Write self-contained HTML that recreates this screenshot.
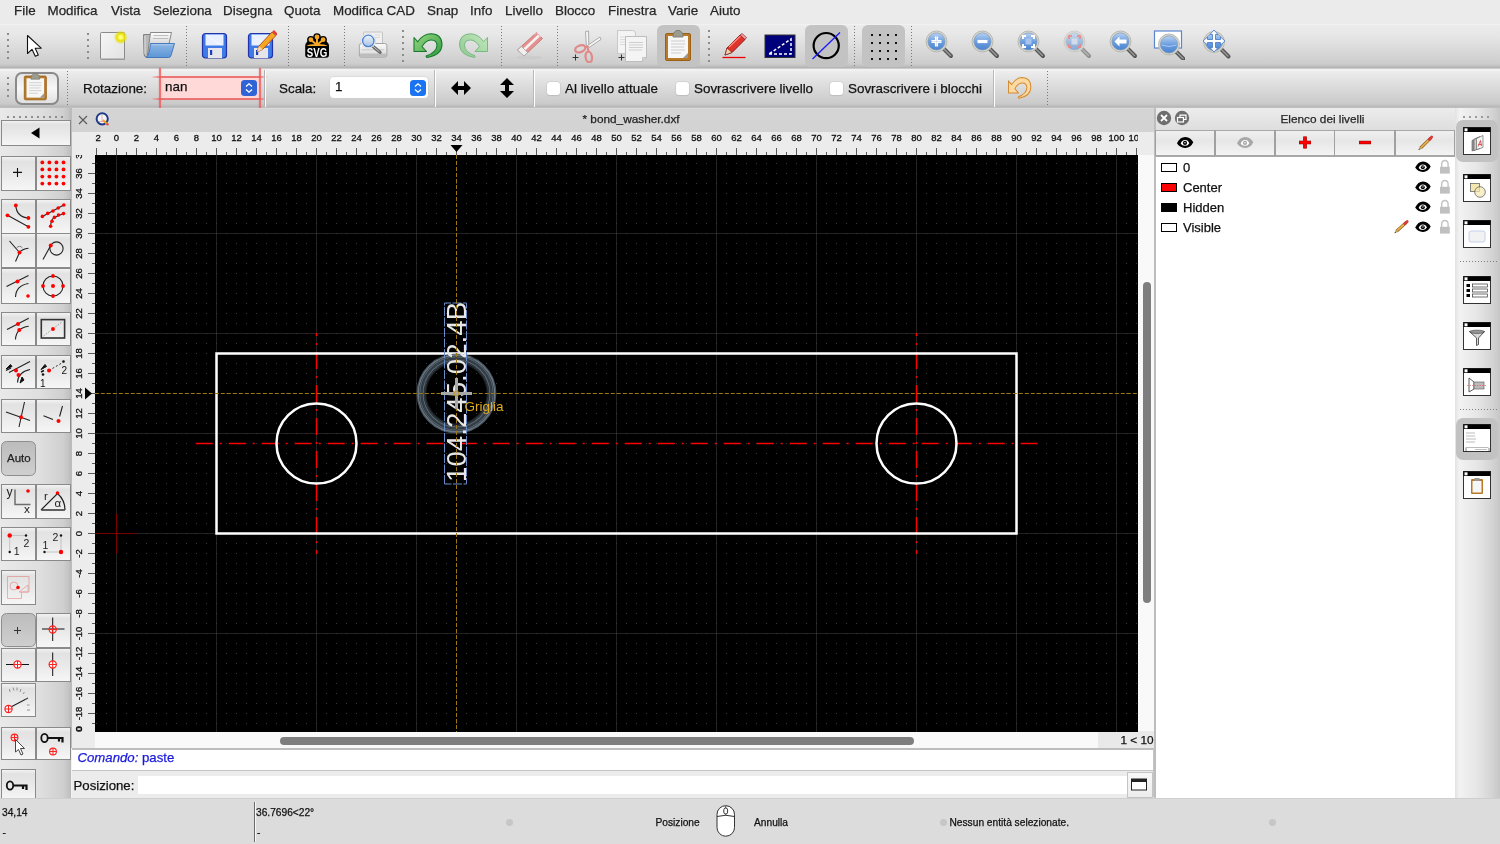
<!DOCTYPE html>
<html><head><meta charset="utf-8">
<style>
*{box-sizing:border-box;margin:0;padding:0}
html,body{width:1500px;height:844px;overflow:hidden;background:#e6e6e6;font-family:"Liberation Sans",sans-serif;color:#222}
.a{position:absolute}
.t{position:absolute;white-space:nowrap;line-height:1;-webkit-text-stroke:0.25px currentColor}
#menu{left:0;top:0;width:1500px;height:24px;background:#ebebeb}
#menu .t{top:3.5px;font-size:13.4px;color:#262626}
.tb{background:linear-gradient(#ededed,#e3e3e3 30%,#cfcfcf 95%,#b9b9b9)}
#tb1{left:0;top:24px;width:1500px;height:44px;background:linear-gradient(#f4f4f4 0,#ebebeb 1.6px,#e7e7e7 25%,#d9d9d9 60%,#cdcdcd 90%,#c2c2c2 95%,#b4b4b4 99%)}
#tb2{left:0;top:68px;width:1500px;height:40px;background:linear-gradient(#b8b8b8 0,#f6f6f6 1.6px,#ededed 3px,#e5e5e5 25%,#d6d6d6 60%,#cbcbcb 88%,#c2c2c2 93%,#b5b5b5 97.5%,#c8c8c8 100%)}
.sep{position:absolute;width:2px;background:repeating-linear-gradient(#8a8a8a 0 1px,transparent 1px 4px)}
.vsep{position:absolute;width:1px;background:#fafafa;border-left:1px solid #c0c0c0}
.press{position:absolute;background:#c4c4c4;border-radius:5px}
#tb2 .t{font-size:13.4px;color:#1e1e1e}
</style></head><body><div id="root" style="position:absolute;left:0;top:0;width:1500px;height:844px;will-change:transform;overflow:hidden;background:#e6e6e6">
<!-- MENU -->
<div id="menu" class="a">
<span class="t" style="left:14px">File</span>
<span class="t" style="left:47.5px">Modifica</span>
<span class="t" style="left:111px">Vista</span>
<span class="t" style="left:153px">Seleziona</span>
<span class="t" style="left:223px">Disegna</span>
<span class="t" style="left:284px">Quota</span>
<span class="t" style="left:333px">Modifica CAD</span>
<span class="t" style="left:427px">Snap</span>
<span class="t" style="left:470px">Info</span>
<span class="t" style="left:505px">Livello</span>
<span class="t" style="left:555px">Blocco</span>
<span class="t" style="left:608px">Finestra</span>
<span class="t" style="left:668px">Varie</span>
<span class="t" style="left:710px">Aiuto</span>
</div>

<!-- TOOLBAR 1 -->
<div id="tb1" class="a"></div>

<!-- TOOLBAR 2 -->
<div id="tb2" class="a"></div>
<div class="a" style="left:7px;top:33px;width:2px;height:2px;background:#8c8c8c"></div><div class="a" style="left:7px;top:39px;width:2px;height:2px;background:#8c8c8c"></div><div class="a" style="left:7px;top:45px;width:2px;height:2px;background:#8c8c8c"></div><div class="a" style="left:7px;top:51px;width:2px;height:2px;background:#8c8c8c"></div><div class="a" style="left:7px;top:57px;width:2px;height:2px;background:#8c8c8c"></div>
<svg class="a" style="left:25px;top:34px" width="18" height="24" viewBox="0 0 18 24" ><path d="M2.5 1.5V19.5L7 15.3L10.3 22.3L13.3 20.9L10.2 14.2H16.2Z" fill="#fff" stroke="#111" stroke-width="1.1" stroke-linejoin="round"/></svg>
<div class="a" style="left:87px;top:33px;width:2px;height:2px;background:#8c8c8c"></div><div class="a" style="left:87px;top:39px;width:2px;height:2px;background:#8c8c8c"></div><div class="a" style="left:87px;top:45px;width:2px;height:2px;background:#8c8c8c"></div><div class="a" style="left:87px;top:51px;width:2px;height:2px;background:#8c8c8c"></div><div class="a" style="left:87px;top:57px;width:2px;height:2px;background:#8c8c8c"></div>
<svg class="a" style="left:98px;top:30px" width="30" height="32" viewBox="0 0 30 32" ><defs><radialGradient id="glow"><stop offset="0.2" stop-color="#ffff80"/><stop offset="0.55" stop-color="#e8e000"/><stop offset="1" stop-color="#e8e000" stop-opacity="0"/></radialGradient><linearGradient id="pg" x1="0" y1="0" x2="1" y2="1"><stop offset="0" stop-color="#f6f6f6"/><stop offset="1" stop-color="#e2e2e2"/></linearGradient></defs><rect x="2.5" y="2.5" width="24" height="27" rx="1" fill="url(#pg)" stroke="#8a8a8a" stroke-width="1"/><rect x="3" y="28.5" width="24" height="1.5" fill="#9a9a9a"/><circle cx="22.7" cy="7.3" r="7" fill="url(#glow)"/></svg>
<svg class="a" style="left:138px;top:26px" width="42" height="38" viewBox="0 0 42 38" ><defs><linearGradient id="fbg" x1="0" y1="0" x2="0" y2="1"><stop offset="0" stop-color="#8fb8e4"/><stop offset="1" stop-color="#5b95d6"/></linearGradient><linearGradient id="fpg" x1="0" y1="0" x2="0" y2="1"><stop offset="0" stop-color="#fdfdfd"/><stop offset="1" stop-color="#b4b4b4"/></linearGradient></defs><path d="M5.5 8.5H13V31H8.5Q6 31 6 28Z" fill="#b8b8b8" stroke="#7a7a7a" stroke-width=".9"/><path d="M7 10V28" stroke="#dcdcdc" stroke-width="1"/><path d="M12.5 6.5H33.5L31 17.5L9.5 29Z" fill="url(#fpg)" stroke="#7d7d7d" stroke-width=".9"/><path d="M15.5 9.5H30.5M15 12.5H30" stroke="#bdbdbd" stroke-width="1.2"/><path d="M12.5 17.5H36.5L33 29.5Q32.5 31.5 30.5 31.5H8Q11.5 29 12.5 17.5Z" fill="url(#fbg)" stroke="#3f72b8" stroke-width=".9"/><path d="M13.5 18.8H35" stroke="#b4d2f0" stroke-width=".8"/></svg>
<div class="a" style="left:186px;top:26px;width:1px;height:40px;background:repeating-linear-gradient(#7a7a7a 0 1px,transparent 1px 3px)"></div>
<svg class="a" style="left:201px;top:32px" width="28" height="28" viewBox="0 0 28 28" ><rect x="1.5" y="1.5" width="24" height="24.5" rx="3" fill="#3f7ae6" stroke="#2233aa" stroke-width="1.2"/><rect x="4.5" y="2.5" width="18" height="11" fill="#e8f0ff"/><path d="M5 3L20 13" stroke="#fff" stroke-width="1" opacity=".6"/><rect x="7" y="16" width="14" height="10" fill="#e6e6ea"/><rect x="9" y="18" width="2.2" height="5" fill="#1a40c0"/></svg>
<svg class="a" style="left:247px;top:28px" width="30" height="32" viewBox="0 0 30 32" ><g transform="translate(0 4)"><rect x="1.5" y="1.5" width="24" height="24.5" rx="3" fill="#3f7ae6" stroke="#2233aa" stroke-width="1.2"/><rect x="4.5" y="2.5" width="18" height="11" fill="#e8f0ff"/><path d="M5 3L20 13" stroke="#fff" stroke-width="1" opacity=".6"/><rect x="7" y="16" width="14" height="10" fill="#e6e6ea"/><rect x="9" y="18" width="2.2" height="5" fill="#1a40c0"/></g><path d="M10 24L12 18L25 4L29 7.5L15.5 21.5Z" fill="#f5a623" stroke="#a8461a" stroke-width="0.9"/><path d="M25 4L27 2L30.5 5.5L29 7.5Z" fill="#e0403a"/><path d="M10 24L12 18L15.5 21.5Z" fill="#f0d8b0"/></svg>
<div class="a" style="left:288px;top:26px;width:1px;height:40px;background:repeating-linear-gradient(#7a7a7a 0 1px,transparent 1px 3px)"></div>
<svg class="a" style="left:300px;top:28px" width="35" height="34" viewBox="0 0 35 34" ><g fill="#000"><circle cx="10.9" cy="11.7" r="3.8"/><circle cx="17" cy="9" r="3.8"/><circle cx="23.1" cy="11.7" r="3.8"/><rect x="5.2" y="14.8" width="23.8" height="15" rx="3"/><path d="M8 13L17 10L26 13L28.5 15.5H5.5Z"/></g><g fill="#f5a828"><circle cx="10.9" cy="11.7" r="2.4"/><circle cx="17" cy="9" r="2.4"/><circle cx="23.1" cy="11.7" r="2.4"/><path d="M6.5 18Q8 16 17 16Q26 16 27.5 18Z"/></g><path d="M10.9 11.7L17 17M17 9V17M23.1 11.7L17 17" stroke="#f5a828" stroke-width="2"/><text transform="translate(17 29) scale(0.72 1)" text-anchor="middle" font-family="Liberation Sans" font-weight="bold" font-size="13.5" fill="#fff">SVG</text></svg>
<div class="a" style="left:344px;top:26px;width:1px;height:40px;background:repeating-linear-gradient(#7a7a7a 0 1px,transparent 1px 3px)"></div>
<svg class="a" style="left:355px;top:28px" width="35" height="34" viewBox="0 0 35 34" ><defs><linearGradient id="prg" x1="0" y1="0" x2="0" y2="1"><stop offset="0" stop-color="#fafafa"/><stop offset="1" stop-color="#d6d6d6"/></linearGradient><linearGradient id="plg" x1="0" y1="0" x2="0" y2="1"><stop offset="0" stop-color="#eef4fb"/><stop offset="1" stop-color="#a9c1e2"/></linearGradient></defs><rect x="8.5" y="4" width="19" height="14" rx="1" fill="#f0f0f0" stroke="#c4c4c4" stroke-width="1"/><path d="M20 7H25M20 9.5H25" stroke="#d8d8d8" stroke-width="1"/><rect x="4.3" y="15.5" width="27.6" height="13.6" rx="2.2" fill="url(#prg)" stroke="#a4a4a4" stroke-width="1"/><rect x="5" y="25.5" width="26.2" height="3.2" rx="1" fill="#bdbdbd"/><path d="M6.5 21.8H29" stroke="#c8c8c8" stroke-width="1"/><path d="M17.5 18L25 24.3" stroke="#6a6a6a" stroke-width="3.4" stroke-linecap="round"/><path d="M18 18.3L24.5 23.8" stroke="#c4c4c4" stroke-width="1"/><circle cx="13.3" cy="12.9" r="7.3" fill="#fbfbfb" stroke="#d0d0d0" stroke-width=".6"/><circle cx="13.3" cy="12.9" r="5.7" fill="url(#plg)" stroke="#4a80d0" stroke-width="1.3"/></svg>
<div class="a" style="left:402px;top:30px;width:2px;height:2px;background:#8c8c8c"></div><div class="a" style="left:402px;top:36px;width:2px;height:2px;background:#8c8c8c"></div><div class="a" style="left:402px;top:42px;width:2px;height:2px;background:#8c8c8c"></div><div class="a" style="left:402px;top:48px;width:2px;height:2px;background:#8c8c8c"></div><div class="a" style="left:402px;top:54px;width:2px;height:2px;background:#8c8c8c"></div><div class="a" style="left:402px;top:60px;width:2px;height:2px;background:#8c8c8c"></div>
<svg class="a" style="left:410px;top:28px" width="36" height="34" viewBox="0 0 36 34" ><defs><linearGradient id="ug" x1="0" y1="0" x2="1" y2="1"><stop offset="0" stop-color="#9ad883"/><stop offset="1" stop-color="#2e9a40"/></linearGradient><linearGradient id="rg" x1="0" y1="0" x2="1" y2="1"><stop offset="0" stop-color="#c4e8bc"/><stop offset="1" stop-color="#8cc890"/></linearGradient></defs><path d="M4 9.5L7.8 13.8Q13 6 21 5.8Q32 6 32 17Q31.5 27 17 29.5Q15.5 28.5 16.5 27.8Q26.5 24.5 27 17.5Q27 12 21 12Q16 12 12 18.5L16.5 23.5L4 23.5Z" fill="url(#ug)" stroke="#167a2c" stroke-width="1.1" stroke-linejoin="round"/></svg>
<svg class="a" style="left:455px;top:28px" width="36" height="34" viewBox="0 0 36 34" ><g transform="translate(36.5 0) scale(-1 1)"><path d="M4 9.5L7.8 13.8Q13 6 21 5.8Q32 6 32 17Q31.5 27 17 29.5Q15.5 28.5 16.5 27.8Q26.5 24.5 27 17.5Q27 12 21 12Q16 12 12 18.5L16.5 23.5L4 23.5Z" fill="url(#rg)" stroke="#78b884" stroke-width="1" stroke-linejoin="round"/></g></svg>
<div class="a" style="left:501px;top:26px;width:1px;height:40px;background:repeating-linear-gradient(#7a7a7a 0 1px,transparent 1px 3px)"></div>
<svg class="a" style="left:512px;top:26px" width="36" height="36" viewBox="0 0 36 36" ><ellipse cx="17" cy="31.5" rx="13" ry="1.8" fill="#c4c4c4" opacity=".55"/><path d="M5.5 24L24.5 6.5L30.5 12.5L12 30Z" fill="#e69090" stroke="#c06a6a" stroke-width=".8"/><path d="M8.5 27L27 9.5" stroke="#f2f2f2" stroke-width="2.6"/><path d="M22 8.5L24.8 7L29 11" stroke="#f0b8b8" stroke-width="1" fill="none"/><path d="M5.5 24L9.5 20.5L15.5 26.5L12 30Z" fill="#f0f0f0" stroke="#a8a8a8" stroke-width=".8"/></svg>
<div class="a" style="left:557px;top:26px;width:1px;height:40px;background:repeating-linear-gradient(#7a7a7a 0 1px,transparent 1px 3px)"></div>
<svg class="a" style="left:569px;top:29px" width="34" height="34" viewBox="0 0 34 34" ><path d="M16.5 2.5L19.5 2L19.8 17L17.5 18Z" fill="#f6f6f6" stroke="#9a9a9a" stroke-width=".8"/><path d="M31 8L32 10.5L20 18.5L18.5 16.5Z" fill="#f6f6f6" stroke="#9a9a9a" stroke-width=".8"/><ellipse cx="11.2" cy="19.8" rx="5.3" ry="3.3" fill="none" stroke="#e08a8a" stroke-width="2.3" transform="rotate(-22 11.2 19.8)"/><ellipse cx="19.8" cy="28" rx="3.2" ry="5.4" fill="none" stroke="#e08a8a" stroke-width="2.3" transform="rotate(-8 19.8 28)"/><path d="M15.5 18.5L18.5 17.5L19.5 22.5" stroke="#e08a8a" stroke-width="2" fill="none"/><path d="M3.5 28.5H9.5M6.5 25.5V31.5" stroke="#333" stroke-width="1"/></svg>
<svg class="a" style="left:615px;top:29px" width="34" height="34" viewBox="0 0 34 34" ><path d="M2.5 1.5H17.5Q20.5 1.5 20.5 4.5V24.5H2.5Z" fill="#f4f4f4" stroke="#c8c8c8" stroke-width="1"/><path d="M5 8H17M5 10.5H17M5 13H17M5 15.5H17" stroke="#dcdcdc" stroke-width="1"/><path d="M10.5 7.5H31.5V28.5L27.5 32.5H10.5Z" fill="#f4f4f4" stroke="#bdbdbd" stroke-width="1"/><path d="M27.5 32.5L27.5 28.5H31.5Z" fill="#d8d8d8" stroke="#bdbdbd" stroke-width=".8"/><path d="M14 13.5H28M14 16H28M14 18.5H28M14 21H27" stroke="#cfcfcf" stroke-width="1"/><path d="M3.5 28.5H9.5M6.5 25.5V31.5" stroke="#333" stroke-width="1"/></svg>
<div class="a" style="left:657px;top:25px;width:43px;height:42px;background:#c3c3c3;border-radius:6px"></div>
<svg class="a" style="left:664px;top:30px" width="28" height="32" viewBox="0 0 28 32" ><rect x="1.5" y="3.5" width="25" height="27" rx="1.5" fill="#b87a28" stroke="#9a6018" stroke-width="1"/><rect x="4" y="6" width="20" height="22" fill="#f7f7f7"/><path d="M19 28L24 23V28Z" fill="#9a9a9a"/><path d="M7 11H21M7 14H21M7 17H20M7 20H21M7 23H17" stroke="#cdcdcd" stroke-width="1"/><path d="M9 5.5Q9 2 11 2L12 0.5H16L17 2Q19 2 19 5.5V7H9Z" fill="#9b9b8e" stroke="#77776a" stroke-width=".8"/></svg>
<div class="a" style="left:708px;top:30px;width:2px;height:2px;background:#8c8c8c"></div><div class="a" style="left:708px;top:36px;width:2px;height:2px;background:#8c8c8c"></div><div class="a" style="left:708px;top:42px;width:2px;height:2px;background:#8c8c8c"></div><div class="a" style="left:708px;top:48px;width:2px;height:2px;background:#8c8c8c"></div><div class="a" style="left:708px;top:54px;width:2px;height:2px;background:#8c8c8c"></div><div class="a" style="left:708px;top:60px;width:2px;height:2px;background:#8c8c8c"></div>
<svg class="a" style="left:721px;top:33px" width="28" height="27" viewBox="0 0 28 27" ><path d="M4 22L6 15L19 2L24 6.5L11 19.5Z" fill="#e2332a" stroke="#7a1010" stroke-width="0.9"/><path d="M19 2L21 0.5L25.5 4.5L24 6.5Z" fill="#f0a0a0" stroke="#7a1010" stroke-width=".6"/><path d="M4 22L6 15L11 19.5Z" fill="#f0d2a8" stroke="#7a1010" stroke-width=".6"/><path d="M8 14L19.5 3" stroke="#ff8a80" stroke-width="1.3"/><path d="M1.5 24.5H24.5" stroke="#e00" stroke-width="1.3"/></svg>
<svg class="a" style="left:764px;top:34px" width="32" height="24" viewBox="0 0 32 24" ><rect x="1" y="1" width="30" height="22.5" fill="#00007a" stroke="#333" stroke-width="1"/><path d="M5 20H27V5Z" fill="none" stroke="#fff" stroke-width="1.5" stroke-dasharray="3 2"/></svg>
<div class="a" style="left:805px;top:25px;width:43px;height:42px;background:#c3c3c3;border-radius:6px"></div>
<svg class="a" style="left:810px;top:30px" width="32" height="32" viewBox="0 0 32 32" ><circle cx="16.2" cy="15.6" r="12.6" fill="none" stroke="#000" stroke-width="2.2"/><path d="M2.5 29L30 2.5" stroke="#1a1aff" stroke-width="1.3"/></svg>
<div class="a" style="left:854px;top:26px;width:1px;height:40px;background:repeating-linear-gradient(#7a7a7a 0 1px,transparent 1px 3px)"></div>
<div class="a" style="left:862px;top:25px;width:43px;height:42px;background:#c3c3c3;border-radius:6px"></div>
<svg class="a" style="left:0;top:0" width="1500" height="68"><rect x="871" y="34" width="2" height="2" fill="#111"/><rect x="871" y="42" width="2" height="2" fill="#111"/><rect x="871" y="50" width="2" height="2" fill="#111"/><rect x="871" y="58" width="2" height="2" fill="#111"/><rect x="879" y="34" width="2" height="2" fill="#111"/><rect x="879" y="42" width="2" height="2" fill="#111"/><rect x="879" y="50" width="2" height="2" fill="#111"/><rect x="879" y="58" width="2" height="2" fill="#111"/><rect x="887" y="34" width="2" height="2" fill="#111"/><rect x="887" y="42" width="2" height="2" fill="#111"/><rect x="887" y="50" width="2" height="2" fill="#111"/><rect x="887" y="58" width="2" height="2" fill="#111"/><rect x="895" y="34" width="2" height="2" fill="#111"/><rect x="895" y="42" width="2" height="2" fill="#111"/><rect x="895" y="50" width="2" height="2" fill="#111"/><rect x="895" y="58" width="2" height="2" fill="#111"/></svg>
<div class="a" style="left:911px;top:26px;width:1px;height:40px;background:repeating-linear-gradient(#7a7a7a 0 1px,transparent 1px 3px)"></div>
<svg class="a" style="left:0;top:0" width="0" height="0"><defs><linearGradient id="lens" x1="0" y1="0" x2="0" y2="1"><stop offset="0" stop-color="#b9d2f2"/><stop offset=".5" stop-color="#6d9fe0"/><stop offset="1" stop-color="#4a83d0"/></linearGradient></defs></svg>
<svg class="a" style="left:924px;top:29px" width="30" height="30" viewBox="0 0 30 30" ><defs><linearGradient id="lens0" x1="0" y1="0" x2="0" y2="1"><stop offset="0" stop-color="#b9d2f2"/><stop offset=".5" stop-color="#6d9fe0"/><stop offset="1" stop-color="#4a83d0"/></linearGradient></defs><g><path d="M20 20L27 27" stroke="#555" stroke-width="4" stroke-linecap="round"/><path d="M20.5 20.5L26.5 26.5" stroke="#999" stroke-width="1.5" stroke-linecap="round"/><circle cx="12.5" cy="12.5" r="10.5" fill="#d8d8d0" stroke="#b8b8b0" stroke-width="1"/><circle cx="12.5" cy="12.5" r="8.6" fill="url(#lens0)" stroke="#7d98b8" stroke-width=".7"/><path d="M12.5 7.5V17.5M7.5 12.5H17.5" stroke="#fff" stroke-width="3.2"/><path d="M12.5 7.5V17.5M7.5 12.5H17.5" stroke="#3a6ab0" stroke-width="0.6" opacity=".3"/></g></svg>
<svg class="a" style="left:970px;top:29px" width="30" height="30" viewBox="0 0 30 30" ><defs><linearGradient id="lens1" x1="0" y1="0" x2="0" y2="1"><stop offset="0" stop-color="#b9d2f2"/><stop offset=".5" stop-color="#6d9fe0"/><stop offset="1" stop-color="#4a83d0"/></linearGradient></defs><g><path d="M20 20L27 27" stroke="#555" stroke-width="4" stroke-linecap="round"/><path d="M20.5 20.5L26.5 26.5" stroke="#999" stroke-width="1.5" stroke-linecap="round"/><circle cx="12.5" cy="12.5" r="10.5" fill="#d8d8d0" stroke="#b8b8b0" stroke-width="1"/><circle cx="12.5" cy="12.5" r="8.6" fill="url(#lens1)" stroke="#7d98b8" stroke-width=".7"/><path d="M7.5 12.5H17.5" stroke="#fff" stroke-width="3.2"/></g></svg>
<svg class="a" style="left:1016px;top:29px" width="30" height="30" viewBox="0 0 30 30" ><defs><linearGradient id="lens2" x1="0" y1="0" x2="0" y2="1"><stop offset="0" stop-color="#b9d2f2"/><stop offset=".5" stop-color="#6d9fe0"/><stop offset="1" stop-color="#4a83d0"/></linearGradient></defs><g><path d="M20 20L27 27" stroke="#555" stroke-width="4" stroke-linecap="round"/><path d="M20.5 20.5L26.5 26.5" stroke="#999" stroke-width="1.5" stroke-linecap="round"/><circle cx="12.5" cy="12.5" r="10.5" fill="#d8d8d0" stroke="#b8b8b0" stroke-width="1"/><circle cx="12.5" cy="12.5" r="8.6" fill="url(#lens2)" stroke="#7d98b8" stroke-width=".7"/><rect x="9.5" y="9.5" width="6" height="6" fill="#a8c4ec"/><path d="M7 10V7H10M15 7H18V10M18 15V18H15M10 18H7V15" fill="none" stroke="#fff" stroke-width="2"/></g></svg>
<svg class="a" style="left:1062px;top:29px" width="30" height="30" viewBox="0 0 30 30" ><defs><linearGradient id="lens3" x1="0" y1="0" x2="0" y2="1"><stop offset="0" stop-color="#b9d2f2"/><stop offset=".5" stop-color="#6d9fe0"/><stop offset="1" stop-color="#4a83d0"/></linearGradient></defs><g opacity=".55"><path d="M20 20L27 27" stroke="#555" stroke-width="4" stroke-linecap="round"/><path d="M20.5 20.5L26.5 26.5" stroke="#999" stroke-width="1.5" stroke-linecap="round"/><circle cx="12.5" cy="12.5" r="10.5" fill="#d8d8d0" stroke="#b8b8b0" stroke-width="1"/><circle cx="12.5" cy="12.5" r="8.6" fill="url(#lens3)" stroke="#7d98b8" stroke-width=".7"/><rect x="9.5" y="9.5" width="6" height="6" fill="#c8d8f0"/><path d="M7 10V7H10M15 7H18V10M18 15V18H15M10 18H7V15" fill="none" stroke="#e85050" stroke-width="2"/></g></svg>
<svg class="a" style="left:1108px;top:29px" width="30" height="30" viewBox="0 0 30 30" ><defs><linearGradient id="lens4" x1="0" y1="0" x2="0" y2="1"><stop offset="0" stop-color="#b9d2f2"/><stop offset=".5" stop-color="#6d9fe0"/><stop offset="1" stop-color="#4a83d0"/></linearGradient></defs><g><path d="M20 20L27 27" stroke="#555" stroke-width="4" stroke-linecap="round"/><path d="M20.5 20.5L26.5 26.5" stroke="#999" stroke-width="1.5" stroke-linecap="round"/><circle cx="12.5" cy="12.5" r="10.5" fill="#d8d8d0" stroke="#b8b8b0" stroke-width="1"/><circle cx="12.5" cy="12.5" r="8.6" fill="url(#lens4)" stroke="#7d98b8" stroke-width=".7"/><path d="M6.5 12.5L11.5 7.5V10.5H18.5V14.5H11.5V17.5Z" fill="#fff"/></g></svg>
<svg class="a" style="left:1153px;top:30px" width="32" height="30" viewBox="0 0 32 30" ><rect x="1.5" y="1" width="27" height="17" fill="#fff" stroke="#5a86d0" stroke-width="1.2"/><defs><linearGradient id="lensw" x1="0" y1="0" x2="0" y2="1"><stop offset="0" stop-color="#b9d2f2"/><stop offset=".5" stop-color="#6d9fe0"/><stop offset="1" stop-color="#4a83d0"/></linearGradient></defs><g transform="translate(3.5 2)"><g><path d="M20 20L27 27" stroke="#555" stroke-width="4" stroke-linecap="round"/><path d="M20.5 20.5L26.5 26.5" stroke="#999" stroke-width="1.5" stroke-linecap="round"/><circle cx="12.5" cy="12.5" r="10.5" fill="#d8d8d0" stroke="#b8b8b0" stroke-width="1"/><circle cx="12.5" cy="12.5" r="8.6" fill="url(#lensw)" stroke="#7d98b8" stroke-width=".7"/><path d="M5 13Q12.5 16 20 13" stroke="#a8c8f0" stroke-width="1" fill="none"/></g></g></svg>
<svg class="a" style="left:1200px;top:28px" width="34" height="32" viewBox="0 0 34 32" ><defs><linearGradient id="lensp" x1="0" y1="0" x2="0" y2="1"><stop offset="0" stop-color="#b9d2f2"/><stop offset=".5" stop-color="#6d9fe0"/><stop offset="1" stop-color="#4a83d0"/></linearGradient></defs><g transform="translate(1.5 1.5)"><g><path d="M20 20L27 27" stroke="#555" stroke-width="4" stroke-linecap="round"/><path d="M20.5 20.5L26.5 26.5" stroke="#999" stroke-width="1.5" stroke-linecap="round"/><circle cx="12.5" cy="12.5" r="10.5" fill="#d8d8d0" stroke="#b8b8b0" stroke-width="1"/><circle cx="12.5" cy="12.5" r="8.6" fill="url(#lensp)" stroke="#7d98b8" stroke-width=".7"/></g></g><path d="M14 2L18 6.5H15.5V11.5H20.5V9L25 13L20.5 17V14.5H15.5V19.5H18L14 24L10 19.5H12.5V14.5H7.5V17L3 13L7.5 9V11.5H12.5V6.5H10Z" fill="#fff" stroke="#4d80cc" stroke-width=".9"/></svg>
<div class="a" style="left:7px;top:77px;width:2px;height:2px;background:#8c8c8c"></div><div class="a" style="left:7px;top:83px;width:2px;height:2px;background:#8c8c8c"></div><div class="a" style="left:7px;top:89px;width:2px;height:2px;background:#8c8c8c"></div><div class="a" style="left:7px;top:95px;width:2px;height:2px;background:#8c8c8c"></div>
<div class="a" style="left:14.5px;top:72px;width:44px;height:32.5px;border:2px solid #8a8a8a;border-radius:7px;background:linear-gradient(#e4e4e4,#f7f7f7 50%,#e0e0e0)"></div>
<svg class="a" style="left:22.8px;top:73.2px" width="28" height="32" viewBox="0 0 28 32" ><g transform="scale(0.88)"><rect x="1.5" y="3.5" width="25" height="27" rx="1.5" fill="#b87a28" stroke="#9a6018" stroke-width="1"/><rect x="4" y="6" width="20" height="22" fill="#f7f7f7"/><path d="M19 28L24 23V28Z" fill="#9a9a9a"/><path d="M7 11H21M7 14H21M7 17H20M7 20H21M7 23H17" stroke="#cdcdcd" stroke-width="1"/><path d="M9 5.5Q9 2 11 2L12 0.5H16L17 2Q19 2 19 5.5V7H9Z" fill="#9b9b8e" stroke="#77776a" stroke-width=".8"/></g></svg>
<div class="a" style="left:67px;top:71px;width:1px;height:34px;background:repeating-linear-gradient(#7a7a7a 0 1px,transparent 1px 3px)"></div>
<span class="t" style="left:83px;top:82.3px;font-size:13.4px;color:#111">Rotazione:</span>
<div class="a" style="left:160px;top:77px;width:100px;height:21.5px;background:#ffd8d8;border-radius:4px"></div>
<div class="a" style="left:159px;top:68px;width:2px;height:40px;background:rgba(236,90,90,.8);box-shadow:0 0 1.5px rgba(236,90,90,.6)"></div><div class="a" style="left:259px;top:68px;width:2px;height:40px;background:rgba(236,90,90,.8);box-shadow:0 0 1.5px rgba(236,90,90,.6)"></div>
<div class="a" style="left:151px;top:76px;width:117px;height:2px;background:linear-gradient(90deg,rgba(236,90,90,0),rgba(236,90,90,.8) 8%,rgba(236,90,90,.8) 92%,rgba(236,90,90,0))"></div><div class="a" style="left:151px;top:97.5px;width:117px;height:2px;background:linear-gradient(90deg,rgba(236,90,90,0),rgba(236,90,90,.8) 8%,rgba(236,90,90,.8) 92%,rgba(236,90,90,0))"></div>
<span class="t" style="left:165px;top:80px;font-size:13.4px;color:#111">nan</span>
<svg class="a" style="left:241px;top:80px" width="16" height="16" viewBox="0 0 16 16" ><rect x="0" y="0" width="16" height="16" rx="3.5" fill="#3064d6"/><path d="M5 6.5L8 3.8L11 6.5M5 9.5L8 12.2L11 9.5" fill="none" stroke="#fff" stroke-width="1.3"/></svg>
<div class="a" style="left:264px;top:70px;width:1px;height:37px;background:#b0b0b0"></div><div class="a" style="left:265px;top:70px;width:1px;height:37px;background:#fff"></div>
<span class="t" style="left:279px;top:82.3px;font-size:13.4px;color:#111">Scala:</span>
<div class="a" style="left:330px;top:77px;width:98px;height:21px;background:#fff;border-radius:4px;box-shadow:0 0 0 .5px #d0d0d0"></div>
<span class="t" style="left:335px;top:80px;font-size:13.4px;color:#111">1</span>
<svg class="a" style="left:410px;top:80px" width="16" height="16" viewBox="0 0 16 16" ><rect x="0" y="0" width="16" height="16" rx="3.5" fill="#1a73f0"/><path d="M5 6.5L8 3.8L11 6.5M5 9.5L8 12.2L11 9.5" fill="none" stroke="#fff" stroke-width="1.3"/></svg>
<div class="a" style="left:433.5px;top:70px;width:1px;height:37px;background:#b8b8b8"></div><div class="a" style="left:434.5px;top:70px;width:1px;height:37px;background:#fff"></div>
<div class="a" style="left:532.5px;top:70px;width:1px;height:37px;background:#b8b8b8"></div><div class="a" style="left:533.5px;top:70px;width:1px;height:37px;background:#fff"></div>
<div class="a" style="left:992.5px;top:70px;width:1px;height:37px;background:#b8b8b8"></div><div class="a" style="left:993.5px;top:70px;width:1px;height:37px;background:#fff"></div>
<svg class="a" style="left:450px;top:80px" width="22" height="16" viewBox="0 0 22 16" ><path d="M1 8L8 1V6H14V1L21 8L14 15V10H8V15Z" fill="#000"/></svg>
<svg class="a" style="left:499px;top:77px" width="16" height="22" viewBox="0 0 16 22" ><path d="M8 1L15 8H10V14H15L8 21L1 14H6V8H1Z" fill="#000"/></svg>
<div class="a" style="left:547px;top:81.5px;width:13px;height:13px;background:#fff;border-radius:3px;box-shadow:0 0 0 .6px #c8c8c8,0 .5px 1px rgba(0,0,0,.15)"></div>
<span class="t" style="left:565px;top:82.3px;font-size:13.4px;color:#111">Al livello attuale</span>
<div class="a" style="left:676px;top:81.5px;width:13px;height:13px;background:#fff;border-radius:3px;box-shadow:0 0 0 .6px #c8c8c8,0 .5px 1px rgba(0,0,0,.15)"></div>
<span class="t" style="left:694px;top:82.3px;font-size:13.4px;color:#111">Sovrascrivere livello</span>
<div class="a" style="left:830px;top:81.5px;width:13px;height:13px;background:#fff;border-radius:3px;box-shadow:0 0 0 .6px #c8c8c8,0 .5px 1px rgba(0,0,0,.15)"></div>
<span class="t" style="left:848px;top:82.3px;font-size:13.4px;color:#111">Sovrascrivere i blocchi</span>
<svg class="a" style="left:1004px;top:72px" width="32" height="30" viewBox="0 0 32 30" ><g transform="translate(1.3 0.5) scale(0.8 0.875)"><path d="M4 9.5L7.8 13.8Q13 6 21 5.8Q32 6 32 17Q31.5 27 17 29.5Q15.5 28.5 16.5 27.8Q26.5 24.5 27 17.5Q27 12 21 12Q16 12 12 18.5L16.5 23.5L4 23.5Z" fill="#fdd9a2" stroke="#d28a30" stroke-width="1.2" stroke-linejoin="round"/></g></svg>
<div class="a" style="left:1047px;top:71px;width:1px;height:34px;background:repeating-linear-gradient(#7a7a7a 0 1px,transparent 1px 3px)"></div>

<!-- LEFT TOOLBAR -->
<div class="a" style="left:0;top:108px;width:72px;height:690px;background:linear-gradient(90deg,#e9e9e9 0,#dfdfdf 55%,#cfcfcf 88%,#c2c2c2 96%,#b8b8b8 98.5%,#f2f2f2 99%)"></div>
<div class="a" style="left:7px;top:116px;width:2px;height:2px;background:#8e8e8e"></div>
<div class="a" style="left:13px;top:116px;width:2px;height:2px;background:#8e8e8e"></div>
<div class="a" style="left:19px;top:116px;width:2px;height:2px;background:#8e8e8e"></div>
<div class="a" style="left:25px;top:116px;width:2px;height:2px;background:#8e8e8e"></div>
<div class="a" style="left:31px;top:116px;width:2px;height:2px;background:#8e8e8e"></div>
<div class="a" style="left:37px;top:116px;width:2px;height:2px;background:#8e8e8e"></div>
<div class="a" style="left:43px;top:116px;width:2px;height:2px;background:#8e8e8e"></div>
<div class="a" style="left:49px;top:116px;width:2px;height:2px;background:#8e8e8e"></div>
<div class="a" style="left:55px;top:116px;width:2px;height:2px;background:#8e8e8e"></div>
<div class="a" style="left:61px;top:116px;width:2px;height:2px;background:#8e8e8e"></div>
<div class="a" style="left:1.2px;top:120px;width:69.5px;height:25.5px;border:1.2px solid #8a8a8a;background:linear-gradient(#f2f2f2 0,#e2e2e2 14%,#eaeaea 55%,#f6f6f6 100%)"></div>
<svg class="a" style="left:29px;top:126px;overflow:visible" width="12" height="14" viewBox="0 0 12 14"><path d="M10.5 1.5V12.5L2 7Z" fill="#000"/></svg>
<div class="a" style="left:1.2px;top:156.2px;width:35.0px;height:34.400000000000006px;border:1.2px solid #8a8a8a;background:linear-gradient(#f2f2f2 0,#e2e2e2 14%,#eaeaea 55%,#f6f6f6 100%)"></div>
<div class="a" style="left:35.6px;top:156.2px;width:35.1px;height:34.400000000000006px;border:1.2px solid #8a8a8a;background:linear-gradient(#f2f2f2 0,#e2e2e2 14%,#eaeaea 55%,#f6f6f6 100%)"></div>
<div class="a" style="left:1.2px;top:199.4px;width:35.0px;height:34.19999999999999px;border:1.2px solid #8a8a8a;background:linear-gradient(#f2f2f2 0,#e2e2e2 14%,#eaeaea 55%,#f6f6f6 100%)"></div>
<div class="a" style="left:35.6px;top:199.4px;width:35.1px;height:34.19999999999999px;border:1.2px solid #8a8a8a;background:linear-gradient(#f2f2f2 0,#e2e2e2 14%,#eaeaea 55%,#f6f6f6 100%)"></div>
<div class="a" style="left:1.2px;top:233.2px;width:35.0px;height:35.10000000000002px;border:1.2px solid #8a8a8a;background:linear-gradient(#f2f2f2 0,#e2e2e2 14%,#eaeaea 55%,#f6f6f6 100%)"></div>
<div class="a" style="left:35.6px;top:233.2px;width:35.1px;height:35.10000000000002px;border:1.2px solid #8a8a8a;background:linear-gradient(#f2f2f2 0,#e2e2e2 14%,#eaeaea 55%,#f6f6f6 100%)"></div>
<div class="a" style="left:1.2px;top:268.3px;width:35.0px;height:35.39999999999998px;border:1.2px solid #8a8a8a;background:linear-gradient(#f2f2f2 0,#e2e2e2 14%,#eaeaea 55%,#f6f6f6 100%)"></div>
<div class="a" style="left:35.6px;top:268.3px;width:35.1px;height:35.39999999999998px;border:1.2px solid #8a8a8a;background:linear-gradient(#f2f2f2 0,#e2e2e2 14%,#eaeaea 55%,#f6f6f6 100%)"></div>
<div class="a" style="left:1.2px;top:312.2px;width:35.0px;height:34.10000000000002px;border:1.2px solid #8a8a8a;background:linear-gradient(#f2f2f2 0,#e2e2e2 14%,#eaeaea 55%,#f6f6f6 100%)"></div>
<div class="a" style="left:35.6px;top:312.2px;width:35.1px;height:34.10000000000002px;border:1.2px solid #8a8a8a;background:linear-gradient(#f2f2f2 0,#e2e2e2 14%,#eaeaea 55%,#f6f6f6 100%)"></div>
<div class="a" style="left:1.2px;top:355.4px;width:35.0px;height:34.10000000000002px;border:1.2px solid #8a8a8a;background:linear-gradient(#f2f2f2 0,#e2e2e2 14%,#eaeaea 55%,#f6f6f6 100%)"></div>
<div class="a" style="left:35.6px;top:355.4px;width:35.1px;height:34.10000000000002px;border:1.2px solid #8a8a8a;background:linear-gradient(#f2f2f2 0,#e2e2e2 14%,#eaeaea 55%,#f6f6f6 100%)"></div>
<div class="a" style="left:1.2px;top:398.6px;width:35.0px;height:34.099999999999966px;border:1.2px solid #8a8a8a;background:linear-gradient(#f2f2f2 0,#e2e2e2 14%,#eaeaea 55%,#f6f6f6 100%)"></div>
<div class="a" style="left:35.6px;top:398.6px;width:35.1px;height:34.099999999999966px;border:1.2px solid #8a8a8a;background:linear-gradient(#f2f2f2 0,#e2e2e2 14%,#eaeaea 55%,#f6f6f6 100%)"></div>
<div class="a" style="left:1.2px;top:441px;width:34.599999999999994px;height:34.60000000000002px;border:1.1px solid #8e8e8e;border-radius:5.5px;background:linear-gradient(#bcbcbc,#cfcfcf)"></div>
<span class="t" style="left:7px;top:453px;font-size:11.5px;color:#222">Auto</span>
<div class="a" style="left:1.2px;top:484.3px;width:35.0px;height:34.30000000000001px;border:1.2px solid #8a8a8a;background:linear-gradient(#f2f2f2 0,#e2e2e2 14%,#eaeaea 55%,#f6f6f6 100%)"></div>
<div class="a" style="left:35.6px;top:484.3px;width:35.1px;height:34.30000000000001px;border:1.2px solid #8a8a8a;background:linear-gradient(#f2f2f2 0,#e2e2e2 14%,#eaeaea 55%,#f6f6f6 100%)"></div>
<div class="a" style="left:1.2px;top:527.2px;width:35.0px;height:34.0px;border:1.2px solid #8a8a8a;background:linear-gradient(#f2f2f2 0,#e2e2e2 14%,#eaeaea 55%,#f6f6f6 100%)"></div>
<div class="a" style="left:35.6px;top:527.2px;width:35.1px;height:34.0px;border:1.2px solid #8a8a8a;background:linear-gradient(#f2f2f2 0,#e2e2e2 14%,#eaeaea 55%,#f6f6f6 100%)"></div>
<div class="a" style="left:1.2px;top:570px;width:35.0px;height:34.60000000000002px;border:1.2px solid #8a8a8a;background:linear-gradient(#f2f2f2 0,#e2e2e2 14%,#eaeaea 55%,#f6f6f6 100%)"></div>
<div class="a" style="left:1.2px;top:613.1px;width:34.599999999999994px;height:34.19999999999993px;border:1.1px solid #8e8e8e;border-radius:5.5px;background:linear-gradient(#bcbcbc,#cfcfcf)"></div>
<div class="a" style="left:35.6px;top:613.1px;width:35.1px;height:34.69999999999993px;border:1.2px solid #8a8a8a;background:linear-gradient(#f2f2f2 0,#e2e2e2 14%,#eaeaea 55%,#f6f6f6 100%)"></div>
<div class="a" style="left:1.2px;top:647.8px;width:35.0px;height:34.40000000000009px;border:1.2px solid #8a8a8a;background:linear-gradient(#f2f2f2 0,#e2e2e2 14%,#eaeaea 55%,#f6f6f6 100%)"></div>
<div class="a" style="left:35.6px;top:647.8px;width:35.1px;height:34.40000000000009px;border:1.2px solid #8a8a8a;background:linear-gradient(#f2f2f2 0,#e2e2e2 14%,#eaeaea 55%,#f6f6f6 100%)"></div>
<div class="a" style="left:1.2px;top:682.8px;width:35.0px;height:34.700000000000045px;border:1.2px solid #8a8a8a;background:linear-gradient(#f2f2f2 0,#e2e2e2 14%,#eaeaea 55%,#f6f6f6 100%)"></div>
<div class="a" style="left:1.2px;top:726.7px;width:35.0px;height:33.69999999999993px;border:1.2px solid #8a8a8a;background:linear-gradient(#f2f2f2 0,#e2e2e2 14%,#eaeaea 55%,#f6f6f6 100%)"></div>
<div class="a" style="left:35.6px;top:726.7px;width:35.1px;height:33.69999999999993px;border:1.2px solid #8a8a8a;background:linear-gradient(#f2f2f2 0,#e2e2e2 14%,#eaeaea 55%,#f6f6f6 100%)"></div>
<div class="a" style="left:1.2px;top:769.4px;width:35.0px;height:30.600000000000023px;border:1.2px solid #8a8a8a;background:linear-gradient(#f2f2f2 0,#e2e2e2 14%,#eaeaea 55%,#f6f6f6 100%)"></div>
<svg class="a" style="left:0px;top:0px;overflow:visible" width="72" height="800" viewBox="0 0 72 800"><path d="M13 172.4H22M17.5 168V177" stroke="#111" stroke-width="1.1"/><circle cx="42.3" cy="162.4" r="1.9" fill="#ff0000"/><circle cx="42.3" cy="169.47" r="1.9" fill="#ff0000"/><circle cx="42.3" cy="176.54000000000002" r="1.9" fill="#ff0000"/><circle cx="42.3" cy="183.61" r="1.9" fill="#ff0000"/><circle cx="49.37" cy="162.4" r="1.9" fill="#ff0000"/><circle cx="49.37" cy="169.47" r="1.9" fill="#ff0000"/><circle cx="49.37" cy="176.54000000000002" r="1.9" fill="#ff0000"/><circle cx="49.37" cy="183.61" r="1.9" fill="#ff0000"/><circle cx="56.44" cy="162.4" r="1.9" fill="#ff0000"/><circle cx="56.44" cy="169.47" r="1.9" fill="#ff0000"/><circle cx="56.44" cy="176.54000000000002" r="1.9" fill="#ff0000"/><circle cx="56.44" cy="183.61" r="1.9" fill="#ff0000"/><circle cx="63.51" cy="162.4" r="1.9" fill="#ff0000"/><circle cx="63.51" cy="169.47" r="1.9" fill="#ff0000"/><circle cx="63.51" cy="176.54000000000002" r="1.9" fill="#ff0000"/><circle cx="63.51" cy="183.61" r="1.9" fill="#ff0000"/><path d="M7.5 215.3L28.4 226.8M15.8 205.4Q16.5 217 28.4 218" stroke="#222" stroke-width="1.1" fill="none"/><circle cx="7.5" cy="215.3" r="1.9" fill="#ff0000"/><circle cx="28.4" cy="226.8" r="1.9" fill="#ff0000"/><circle cx="15.8" cy="205.4" r="1.9" fill="#ff0000"/><circle cx="28.4" cy="218" r="1.9" fill="#ff0000"/><path d="M42.4 216.4L63.8 205M50.6 226.3Q51 219 54.4 217.4L63.5 213.6" stroke="#222" stroke-width="1.1" fill="none"/><circle cx="42.4" cy="216.4" r="1.8" fill="#ff0000"/><circle cx="47.7" cy="213.4" r="1.8" fill="#ff0000"/><circle cx="53" cy="211" r="1.8" fill="#ff0000"/><circle cx="58.2" cy="208" r="1.8" fill="#ff0000"/><circle cx="63.8" cy="205" r="1.8" fill="#ff0000"/><circle cx="50.6" cy="226.3" r="1.8" fill="#ff0000"/><circle cx="52" cy="221.3" r="1.8" fill="#ff0000"/><circle cx="54.4" cy="217.4" r="1.8" fill="#ff0000"/><circle cx="58.5" cy="215" r="1.8" fill="#ff0000"/><circle cx="63.5" cy="213.6" r="1.8" fill="#ff0000"/><path d="M9.5 241L19.5 252.5L15.5 261.5M19.5 252.5Q22 249 28.5 248.2" stroke="#222" stroke-width="1.1" fill="none"/><path d="M16.5 248Q19.5 244.5 22.5 248" stroke="#555" stroke-width=".7" fill="none"/><circle cx="19.5" cy="252.5" r="2" fill="#ff0000"/><path d="M43 259.5L50.7 245.5" stroke="#222" stroke-width="1.1" fill="none"/><circle cx="56.5" cy="248.5" r="6.6" stroke="#222" stroke-width="1.1" fill="none"/><circle cx="50.7" cy="245.5" r="2" fill="#ff0000"/><path d="M6.5 286.5L28.5 275.5M15.5 297Q16 285.5 28.5 283.5" stroke="#222" stroke-width="1.1" fill="none"/><circle cx="17.5" cy="281.4" r="2" fill="#ff0000"/><circle cx="28" cy="296" r="1.8" fill="#ff0000"/><circle cx="53" cy="286" r="10" stroke="#222" stroke-width="1.1" fill="none"/><circle cx="53" cy="286" r="2" fill="#ff0000"/><circle cx="53" cy="276" r="1.9" fill="#ff0000"/><circle cx="53" cy="296" r="1.9" fill="#ff0000"/><circle cx="43" cy="286" r="1.9" fill="#ff0000"/><circle cx="63" cy="286" r="1.9" fill="#ff0000"/><path d="M7 329.5L28.7 318.2M15.5 339.5Q16 328 28.7 326.3" stroke="#222" stroke-width="1.1" fill="none"/><circle cx="18" cy="324" r="2" fill="#ff0000"/><circle cx="19.3" cy="330" r="2" fill="#ff0000"/><rect x="41.3" y="319.6" width="23.3" height="18.4" fill="none" stroke="#333" stroke-width="1.6"/><path d="M43.5 336L62.5 321.5" stroke="#777" stroke-width=".7" stroke-dasharray="1.5 1.5"/><circle cx="53" cy="329" r="1.9" fill="#ff0000"/><path d="M9 372.5L30 361.5M17.5 382.5Q18 372 30 369.5" stroke="#222" stroke-width="1.1" fill="none"/><path d="M6 369L12 366.5L10.5 364.5Z M20 383L22 377L24 380Z" fill="#111" stroke="#111" stroke-width="1"/><path d="M6 370.5L11 368" stroke="#111" stroke-width="1.2"/><circle cx="16" cy="370.5" r="2" fill="#ff0000"/><circle cx="18.5" cy="375" r="2" fill="#ff0000"/><path d="M49 370.5L63.5 362" stroke="#333" stroke-width="1" stroke-dasharray="2 2"/><path d="M41 369.5L46.5 366.5L45 364.5Z" fill="#111" stroke="#111"/><path d="M41 372L44 370.5" stroke="#111" stroke-width="1.5"/><circle cx="43" cy="374.5" r="1.3" fill="#111"/><circle cx="63.5" cy="361.5" r="1.3" fill="#111"/><circle cx="49" cy="370.5" r="2" fill="#ff0000"/><text x="40" y="387" font-family="Liberation Sans" font-size="10" fill="#111">1</text><text x="61.5" y="374" font-family="Liberation Sans" font-size="10" fill="#111">2</text><path d="M6 412L30 420.5M24.5 402L19 427" stroke="#222" stroke-width="1.1" fill="none"/><circle cx="21" cy="417.3" r="2" fill="#ff0000"/><path d="M43.5 415.8L53 419.5M62.5 406L59.6 416.5" stroke="#222" stroke-width="1.1" fill="none"/><circle cx="58.5" cy="421" r="2" fill="#ff0000"/><text x="6.5" y="496" font-family="Liberation Sans" font-size="12.3" fill="#222">y</text><path d="M15 489.5V504.5H30.5" stroke="#6e6e6e" stroke-width="1.5" fill="none"/><text x="24" y="513.3" font-family="Liberation Sans" font-size="11.8" fill="#222">x</text><circle cx="28" cy="491" r="1.8" fill="#ff0000"/><text x="44" y="500.3" font-family="Liberation Sans" font-size="11.5" fill="#222">r</text><path d="M41 510H65M41 510L57.5 493.5Q65 500 65 510" stroke="#222" stroke-width="1.2" fill="none"/><path d="M41.5 510H64.5" stroke="#555" stroke-width="1.6"/><text x="54.5" y="507.3" font-family="Liberation Sans" font-size="11.5" fill="#222">α</text><circle cx="57.5" cy="493" r="1.8" fill="#ff0000"/><path d="M9.7 535.5H26M9.7 535.5V552" stroke="#c4c4c4" stroke-width="1" fill="none"/><circle cx="9.7" cy="535.5" r="2.2" fill="#ff0000"/><circle cx="26" cy="535.5" r="1.2" fill="#111"/><circle cx="9.7" cy="552" r="1.2" fill="#111"/><text x="13.8" y="554.5" font-family="Liberation Sans" font-size="10.5" fill="#222">1</text><text x="23.5" y="546.8" font-family="Liberation Sans" font-size="10.5" fill="#222">2</text><path d="M44.5 552H61M61 535.5V552" stroke="#c4c4c4" stroke-width="1" fill="none"/><circle cx="61" cy="552" r="2.2" fill="#ff0000"/><circle cx="44.5" cy="552" r="1.2" fill="#111"/><circle cx="61" cy="535.5" r="1.2" fill="#111"/><text x="42.5" y="549.3" font-family="Liberation Sans" font-size="10.5" fill="#222">1</text><text x="52.5" y="540.5" font-family="Liberation Sans" font-size="10.5" fill="#222">2</text><g opacity=".45"><path d="M7.5 576.5H29V592H21.5V598.5H7.5Z" fill="none" stroke="#e04040" stroke-width=".8"/><circle cx="14" cy="586" r="4" fill="none" stroke="#e04040" stroke-width=".8"/><path d="M19 592L28 585V592Z" fill="none" stroke="#e04040" stroke-width=".8"/></g><circle cx="18" cy="587.5" r="1.8" fill="#ff0000"/><path d="M14 630.5H21M17.5 627V634" stroke="#333" stroke-width="1"/><path d="M42 629H64.5M52.7 617.5V641" stroke="#111" stroke-width="1"/><circle cx="52.7" cy="629.5" r="3.6" fill="none" stroke="#ff2020" stroke-width="1.2"/><path d="M49.5 629.5H56M52.7 626.3V632.7" stroke="#ff2020" stroke-width="1"/><path d="M6 664.5H29" stroke="#111" stroke-width="1"/><circle cx="17.5" cy="664.5" r="3.6" fill="#fff" stroke="#ff2020" stroke-width="1.2"/><path d="M14 664.5H21M17.5 661V668" stroke="#ff2020" stroke-width="1"/><path d="M52.7 652.5V676" stroke="#111" stroke-width="1"/><circle cx="52.7" cy="664.5" r="3.6" fill="#fff" stroke="#ff2020" stroke-width="1.2"/><path d="M49 664.5H56.5M52.7 661V668" stroke="#ff2020" stroke-width="1"/><path d="M9 708L28 698" stroke="#222" stroke-width="1.1"/><path d="M9.5 689L10 692M13 687.5L14 690.5M17 687.5L17 690.5M21 689L20 692M24.5 692L23 694M27.5 698.5L25.5 699.5M29.5 705L27 705M30 710H27" stroke="#888" stroke-width=".9"/><circle cx="8.5" cy="709" r="3.6" fill="#fff" stroke="#ff2020" stroke-width="1.2"/><path d="M5 709H12M8.5 705.5V712.5" stroke="#ff2020" stroke-width="1"/><circle cx="14.5" cy="737.5" r="3.4" fill="none" stroke="#ff2020" stroke-width="1.1"/><path d="M11 737.5H18M14.5 734V741" stroke="#ff2020" stroke-width="1"/><path d="M15.5 739.5V752L18.5 749.5L21 755L23 754L20.5 748.5H24.5Z" fill="#fff" stroke="#333" stroke-width=".9"/><ellipse cx="44.5" cy="738" rx="3.2" ry="4.2" fill="none" stroke="#111" stroke-width="1.8"/><path d="M47.5 738H62.5V742.5M59 738V741.5" stroke="#111" stroke-width="2.2" fill="none"/><circle cx="53" cy="751.5" r="3.4" fill="none" stroke="#ff2020" stroke-width="1.1"/><path d="M49.5 751.5H56.5M53 748V755" stroke="#ff2020" stroke-width="1"/><ellipse cx="10" cy="785.5" rx="3.2" ry="4.2" fill="none" stroke="#111" stroke-width="1.8"/><path d="M13 785.5H26.5V790M23 785.5V789" stroke="#111" stroke-width="2.2" fill="none"/></svg>

<!-- MDI window -->
<div class="a" style="left:72px;top:108px;width:1082px;height:24px;background:linear-gradient(#dedede 0,#d4d4d4 6%,#d3d3d3 100%)"></div>
<div class="a" style="left:71px;top:108px;width:1.2px;height:640px;background:#bcbcbc"></div>
<span class="t" style="left:582.5px;top:114px;font-size:11.8px;color:#1e1e1e">* bond_washer.dxf</span>
<svg class="a" style="left:70px;top:108px;overflow:visible" width="50" height="24" viewBox="0 0 50 24"><path d="M9 8L17 16M17 8L9 16" stroke="#5a5a5a" stroke-width="1.1"/><circle cx="32.2" cy="10.8" r="5.6" fill="#f4f4f4" stroke="#1e3a8a" stroke-width="2"/><path d="M28.5 13.5H36M32 7V14" stroke="#e07070" stroke-width=".5"/><path d="M33 12L37 16" stroke="#f0a020" stroke-width="2"/><circle cx="37.5" cy="16.3" r="1.2" fill="#e05050"/></svg>
<div class="a" style="left:72px;top:132px;width:23px;height:23px;background:#ececec"></div>
<div class="a" style="left:72px;top:732px;width:23px;height:16px;background:#ececec"></div>
<div class="a" style="left:95px;top:732px;width:1003px;height:16px;background:#f9f9f9"></div>
<div class="a" style="left:1098px;top:731px;width:56px;height:17px;background:#e9e9e9"></div>
<span class="t" style="left:1120.5px;top:735.3px;font-size:11.8px;color:#111">1 &lt; 10</span>
<div class="a" style="left:280px;top:737px;width:633.5px;height:7.8px;background:#7e7e7e;border-radius:4px"></div>
<div class="a" style="left:1138px;top:155px;width:16px;height:576px;background:#f9f9f9"></div>
<div class="a" style="left:1143.3px;top:281.8px;width:7.4px;height:321.2px;background:#7e7e7e;border-radius:4px"></div>
<div class="a" style="left:1138px;top:132px;width:16px;height:23px;background:#ececec"></div>
<div class="a" style="left:72px;top:748px;width:1082px;height:1.5px;background:#bdbdbd"></div>
<div class="a" style="left:72px;top:749.5px;width:1082px;height:20.5px;background:#fff"></div>
<div class="a" style="left:72px;top:770px;width:1082px;height:1.3px;background:#c4c4c4"></div>
<div class="a" style="left:72px;top:771.3px;width:1082px;height:27px;background:#ececec"></div>
<span class="t" style="left:77.5px;top:751.3px;font-size:13.2px;color:#1a1adc"><i>Comando:</i> paste</span>
<span class="t" style="left:73.5px;top:778.6px;font-size:13.2px;color:#111">Posizione:</span>
<div class="a" style="left:138px;top:776px;width:989px;height:18px;background:#fff"></div>
<div class="a" style="left:1127px;top:771.5px;width:26px;height:26px;background:linear-gradient(#f8f8f8,#ececec);border:1px solid #c4c4c4"></div>
<svg class="a" style="left:1130px;top:777px;overflow:visible" width="20" height="16" viewBox="0 0 20 16"><rect x="1.5" y="2" width="15" height="11" fill="#fff" stroke="#222" stroke-width="1"/><rect x="1.5" y="2" width="15" height="3" fill="#222"/></svg>
<div class="a" style="left:1153px;top:748px;width:1.5px;height:49px;background:#c4c4c4"></div>
<div class="a" style="left:0;top:798px;width:1500px;height:46px;background:#dcdcdc"></div>
<div class="a" style="left:0;top:797.5px;width:1500px;height:1px;background:#cfcfcf"></div>
<span class="t" style="left:2px;top:808px;font-size:10.2px;color:#111">34,14</span>
<span class="t" style="left:2.5px;top:827.5px;font-size:10.2px;color:#111">-</span>
<div class="a" style="left:253.5px;top:802px;width:1px;height:40px;background:#6a6a6a"></div><div class="a" style="left:254.5px;top:802px;width:1px;height:40px;background:#f8f8f8"></div>
<span class="t" style="left:256px;top:808px;font-size:10.2px;color:#111">36.7696&lt;22°</span>
<span class="t" style="left:257px;top:827.5px;font-size:10.2px;color:#111">-</span>
<div class="a" style="left:506.0px;top:818.5px;width:7px;height:7px;border-radius:50%;background:#c6c6c6"></div>
<div class="a" style="left:939.5px;top:818.5px;width:7px;height:7px;border-radius:50%;background:#c6c6c6"></div>
<div class="a" style="left:1268.5px;top:818.5px;width:7px;height:7px;border-radius:50%;background:#c6c6c6"></div>
<span class="t" style="left:655.5px;top:817.8px;font-size:10.2px;color:#111">Posizione</span>
<span class="t" style="left:754px;top:817.8px;font-size:10.2px;color:#111">Annulla</span>
<span class="t" style="left:949.5px;top:817.8px;font-size:10.2px;color:#111">Nessun entità selezionate.</span>
<svg class="a" style="left:716px;top:805px;overflow:visible" width="20" height="32" viewBox="0 0 20 32"><rect x="1" y="0.7" width="17.5" height="30.5" rx="8.7" fill="#fff" stroke="#333" stroke-width="1"/><path d="M1 11.5Q9.7 9 18.5 11.5" stroke="#333" stroke-width="1" fill="none"/><path d="M9.7 1V10.3" stroke="#333" stroke-width=".8"/><rect x="7.8" y="3" width="3.8" height="6" rx="1.9" fill="#fff" stroke="#333" stroke-width="1"/></svg>
<svg class="a" style="left:95px;top:155px" width="1043" height="577" viewBox="0 0 1043 577">
<defs><pattern id="dots" x="1" y="8" width="10" height="10" patternUnits="userSpaceOnUse"><rect x="0" y="0" width="1" height="1" fill="#3a3a3a"/></pattern></defs>
<rect width="1043" height="577" fill="#000"/>
<path d="M21.5 0V577 M121.5 0V577 M221.5 0V577 M321.5 0V577 M421.5 0V577 M521.5 0V577 M621.5 0V577 M721.5 0V577 M821.5 0V577 M921.5 0V577 M1021.5 0V577 M0 478.5H1043 M0 378.5H1043 M0 278.5H1043 M0 178.5H1043 M0 78.5H1043" stroke="#222" stroke-width="1"/>
<rect width="1043" height="577" fill="url(#dots)"/>
<path d="M100.69999999999999 288.5H942.5" stroke="#ff0000" stroke-width="1.5" stroke-dasharray="17 7 2 7"/>
<path d="M221.5 178V399" stroke="#ff0000" stroke-width="1.5" stroke-dasharray="17 7 2 7" stroke-dashoffset="14"/>
<path d="M821.5 178V399" stroke="#ff0000" stroke-width="1.5" stroke-dasharray="17 7 2 7" stroke-dashoffset="14"/>
<rect x="121.5" y="198.5" width="800" height="180" fill="none" stroke="#fff" stroke-width="2.5"/>
<circle cx="221.5" cy="288.5" r="40" fill="none" stroke="#fff" stroke-width="2.5"/>
<circle cx="821.5" cy="288.5" r="40" fill="none" stroke="#fff" stroke-width="2.5"/>
<path d="M1.5 378.5H41.5M21.5 398.5V358.5" stroke="#7a0000" stroke-width="1"/>
<circle cx="361.5" cy="238.5" r="39.3" fill="none" stroke="#4d5b66" stroke-width="1.2" opacity="0.9"/>
<circle cx="361.5" cy="238.5" r="38.2" fill="none" stroke="#6f808d" stroke-width="1.4" opacity="0.95"/>
<circle cx="361.5" cy="238.5" r="36.6" fill="none" stroke="#56646f" stroke-width="1.6" opacity="0.9"/>
<circle cx="361.5" cy="238.5" r="35.0" fill="none" stroke="#3c4852" stroke-width="1.6" opacity="0.9"/>
<circle cx="361.5" cy="238.5" r="33.4" fill="none" stroke="#5e6d79" stroke-width="1.5" opacity="0.9"/>
<circle cx="361.5" cy="238.5" r="31.9" fill="none" stroke="#3a454e" stroke-width="1.5" opacity="0.8"/>
<circle cx="361.5" cy="238.5" r="30.7" fill="none" stroke="#2a333a" stroke-width="1.2" opacity="0.6"/>
<g transform="translate(370.5 327) rotate(-90)"><rect x="-2" y="-21" width="181" height="22" fill="none" stroke="#6a8ccc" stroke-width="1" stroke-dasharray="9 1.5"/><text x="0" y="0" font-family="Liberation Sans" font-size="27.7" fill="#e6e6e6">104.245.02.4B</text></g>
<path d="M0 238.5H1043" stroke="#9a7812" stroke-width="1" stroke-dasharray="4 2" stroke-dashoffset="0.2"/>
<path d="M361.5 0V577" stroke="#9a7812" stroke-width="1" stroke-dasharray="4 2"/>
<path d="M346.0 238.5H377.0M361.5 223.0V254.0" stroke="#a8a8a8" stroke-width="3"/>
<circle cx="361.5" cy="238.5" r="2.5" fill="none" stroke="#c09010" stroke-width="1"/>
<text x="369.5" y="256.3" font-family="Liberation Sans" font-size="13.5" fill="#e2ac1c">Griglia</text>
</svg>
<svg class="a" style="left:95px;top:131px" width="1043" height="24">
<rect y="1" width="1043" height="23" fill="#ececec"/>
<path d="M1.5 17V24 M11.5 21V24 M21.5 17V24 M31.5 21V24 M41.5 17V24 M51.5 21V24 M61.5 17V24 M71.5 21V24 M81.5 17V24 M91.5 21V24 M101.5 17V24 M111.5 21V24 M121.5 17V24 M131.5 21V24 M141.5 17V24 M151.5 21V24 M161.5 17V24 M171.5 21V24 M181.5 17V24 M191.5 21V24 M201.5 17V24 M211.5 21V24 M221.5 17V24 M231.5 21V24 M241.5 17V24 M251.5 21V24 M261.5 17V24 M271.5 21V24 M281.5 17V24 M291.5 21V24 M301.5 17V24 M311.5 21V24 M321.5 17V24 M331.5 21V24 M341.5 17V24 M351.5 21V24 M361.5 17V24 M371.5 21V24 M381.5 17V24 M391.5 21V24 M401.5 17V24 M411.5 21V24 M421.5 17V24 M431.5 21V24 M441.5 17V24 M451.5 21V24 M461.5 17V24 M471.5 21V24 M481.5 17V24 M491.5 21V24 M501.5 17V24 M511.5 21V24 M521.5 17V24 M531.5 21V24 M541.5 17V24 M551.5 21V24 M561.5 17V24 M571.5 21V24 M581.5 17V24 M591.5 21V24 M601.5 17V24 M611.5 21V24 M621.5 17V24 M631.5 21V24 M641.5 17V24 M651.5 21V24 M661.5 17V24 M671.5 21V24 M681.5 17V24 M691.5 21V24 M701.5 17V24 M711.5 21V24 M721.5 17V24 M731.5 21V24 M741.5 17V24 M751.5 21V24 M761.5 17V24 M771.5 21V24 M781.5 17V24 M791.5 21V24 M801.5 17V24 M811.5 21V24 M821.5 17V24 M831.5 21V24 M841.5 17V24 M851.5 21V24 M861.5 17V24 M871.5 21V24 M881.5 17V24 M891.5 21V24 M901.5 17V24 M911.5 21V24 M921.5 17V24 M931.5 21V24 M941.5 17V24 M951.5 21V24 M961.5 17V24 M971.5 21V24 M981.5 17V24 M991.5 21V24 M1001.5 17V24 M1011.5 21V24 M1021.5 17V24 M1031.5 21V24 M1041.5 17V24" stroke="#5a5a5a" stroke-width="1"/>
<g font-family="Liberation Sans" font-size="9.5" fill="#111" stroke="#111" stroke-width="0.3"><text x="1.5" y="10" text-anchor="middle">-2</text><text x="21.5" y="10" text-anchor="middle">0</text><text x="41.5" y="10" text-anchor="middle">2</text><text x="61.5" y="10" text-anchor="middle">4</text><text x="81.5" y="10" text-anchor="middle">6</text><text x="101.5" y="10" text-anchor="middle">8</text><text x="121.5" y="10" text-anchor="middle">10</text><text x="141.5" y="10" text-anchor="middle">12</text><text x="161.5" y="10" text-anchor="middle">14</text><text x="181.5" y="10" text-anchor="middle">16</text><text x="201.5" y="10" text-anchor="middle">18</text><text x="221.5" y="10" text-anchor="middle">20</text><text x="241.5" y="10" text-anchor="middle">22</text><text x="261.5" y="10" text-anchor="middle">24</text><text x="281.5" y="10" text-anchor="middle">26</text><text x="301.5" y="10" text-anchor="middle">28</text><text x="321.5" y="10" text-anchor="middle">30</text><text x="341.5" y="10" text-anchor="middle">32</text><text x="361.5" y="10" text-anchor="middle">34</text><text x="381.5" y="10" text-anchor="middle">36</text><text x="401.5" y="10" text-anchor="middle">38</text><text x="421.5" y="10" text-anchor="middle">40</text><text x="441.5" y="10" text-anchor="middle">42</text><text x="461.5" y="10" text-anchor="middle">44</text><text x="481.5" y="10" text-anchor="middle">46</text><text x="501.5" y="10" text-anchor="middle">48</text><text x="521.5" y="10" text-anchor="middle">50</text><text x="541.5" y="10" text-anchor="middle">52</text><text x="561.5" y="10" text-anchor="middle">54</text><text x="581.5" y="10" text-anchor="middle">56</text><text x="601.5" y="10" text-anchor="middle">58</text><text x="621.5" y="10" text-anchor="middle">60</text><text x="641.5" y="10" text-anchor="middle">62</text><text x="661.5" y="10" text-anchor="middle">64</text><text x="681.5" y="10" text-anchor="middle">66</text><text x="701.5" y="10" text-anchor="middle">68</text><text x="721.5" y="10" text-anchor="middle">70</text><text x="741.5" y="10" text-anchor="middle">72</text><text x="761.5" y="10" text-anchor="middle">74</text><text x="781.5" y="10" text-anchor="middle">76</text><text x="801.5" y="10" text-anchor="middle">78</text><text x="821.5" y="10" text-anchor="middle">80</text><text x="841.5" y="10" text-anchor="middle">82</text><text x="861.5" y="10" text-anchor="middle">84</text><text x="881.5" y="10" text-anchor="middle">86</text><text x="901.5" y="10" text-anchor="middle">88</text><text x="921.5" y="10" text-anchor="middle">90</text><text x="941.5" y="10" text-anchor="middle">92</text><text x="961.5" y="10" text-anchor="middle">94</text><text x="981.5" y="10" text-anchor="middle">96</text><text x="1001.5" y="10" text-anchor="middle">98</text><text x="1021.5" y="10" text-anchor="middle">100</text><text x="1041.5" y="10" text-anchor="middle">102</text></g>
<path d="M355.5 14H367.5L361.5 21Z" fill="#000"/>
</svg>
<svg class="a" style="left:72px;top:155px" width="23" height="577">
<rect width="23" height="577" fill="#ececec"/>
<path d="M16 578.5H23 M20 568.5H23 M16 558.5H23 M20 548.5H23 M16 538.5H23 M20 528.5H23 M16 518.5H23 M20 508.5H23 M16 498.5H23 M20 488.5H23 M16 478.5H23 M20 468.5H23 M16 458.5H23 M20 448.5H23 M16 438.5H23 M20 428.5H23 M16 418.5H23 M20 408.5H23 M16 398.5H23 M20 388.5H23 M16 378.5H23 M20 368.5H23 M16 358.5H23 M20 348.5H23 M16 338.5H23 M20 328.5H23 M16 318.5H23 M20 308.5H23 M16 298.5H23 M20 288.5H23 M16 278.5H23 M20 268.5H23 M16 258.5H23 M20 248.5H23 M16 238.5H23 M20 228.5H23 M16 218.5H23 M20 208.5H23 M16 198.5H23 M20 188.5H23 M16 178.5H23 M20 168.5H23 M16 158.5H23 M20 148.5H23 M16 138.5H23 M20 128.5H23 M16 118.5H23 M20 108.5H23 M16 98.5H23 M20 88.5H23 M16 78.5H23 M20 68.5H23 M16 58.5H23 M20 48.5H23 M16 38.5H23 M20 28.5H23 M16 18.5H23 M20 8.5H23 M16 -1.5H23" stroke="#5a5a5a" stroke-width="1"/>
<g font-family="Liberation Sans" font-size="9.5" fill="#111" stroke="#111" stroke-width="0.3"><text transform="translate(10 578.5) rotate(-90)" text-anchor="middle">-20</text><text transform="translate(10 558.5) rotate(-90)" text-anchor="middle">-18</text><text transform="translate(10 538.5) rotate(-90)" text-anchor="middle">-16</text><text transform="translate(10 518.5) rotate(-90)" text-anchor="middle">-14</text><text transform="translate(10 498.5) rotate(-90)" text-anchor="middle">-12</text><text transform="translate(10 478.5) rotate(-90)" text-anchor="middle">-10</text><text transform="translate(10 458.5) rotate(-90)" text-anchor="middle">-8</text><text transform="translate(10 438.5) rotate(-90)" text-anchor="middle">-6</text><text transform="translate(10 418.5) rotate(-90)" text-anchor="middle">-4</text><text transform="translate(10 398.5) rotate(-90)" text-anchor="middle">-2</text><text transform="translate(10 378.5) rotate(-90)" text-anchor="middle">0</text><text transform="translate(10 358.5) rotate(-90)" text-anchor="middle">2</text><text transform="translate(10 338.5) rotate(-90)" text-anchor="middle">4</text><text transform="translate(10 318.5) rotate(-90)" text-anchor="middle">6</text><text transform="translate(10 298.5) rotate(-90)" text-anchor="middle">8</text><text transform="translate(10 278.5) rotate(-90)" text-anchor="middle">10</text><text transform="translate(10 258.5) rotate(-90)" text-anchor="middle">12</text><text transform="translate(10 238.5) rotate(-90)" text-anchor="middle">14</text><text transform="translate(10 218.5) rotate(-90)" text-anchor="middle">16</text><text transform="translate(10 198.5) rotate(-90)" text-anchor="middle">18</text><text transform="translate(10 178.5) rotate(-90)" text-anchor="middle">20</text><text transform="translate(10 158.5) rotate(-90)" text-anchor="middle">22</text><text transform="translate(10 138.5) rotate(-90)" text-anchor="middle">24</text><text transform="translate(10 118.5) rotate(-90)" text-anchor="middle">26</text><text transform="translate(10 98.5) rotate(-90)" text-anchor="middle">28</text><text transform="translate(10 78.5) rotate(-90)" text-anchor="middle">30</text><text transform="translate(10 58.5) rotate(-90)" text-anchor="middle">32</text><text transform="translate(10 38.5) rotate(-90)" text-anchor="middle">34</text><text transform="translate(10 18.5) rotate(-90)" text-anchor="middle">36</text><text transform="translate(10 -1.5) rotate(-90)" text-anchor="middle">38</text><text transform="translate(10 573.5) rotate(-90)" text-anchor="middle">0</text></g>
<path d="M13 232.5V244.5L20 238.5Z" fill="#000"/>
</svg>

<!-- RIGHT DOCK -->
<div class="a" style="left:1154px;top:108px;width:301px;height:690px;background:#fff"></div>
<div class="a" style="left:1154px;top:108px;width:1.5px;height:690px;background:#bdbdbd"></div>
<div class="a" style="left:1155.5px;top:108px;width:299px;height:22px;background:linear-gradient(#ececec,#dedede)"></div>
<span class="t" style="left:1280.5px;top:114px;font-size:11.8px;color:#262626">Elenco dei livelli</span>
<svg class="a" style="left:1156px;top:110px;overflow:visible" width="36" height="18" viewBox="0 0 36 18"><circle cx="8" cy="8" r="7.2" fill="#6e6e6e"/><path d="M5 5L11 11M11 5L5 11" stroke="#fff" stroke-width="1.8"/><circle cx="26" cy="8" r="7.2" fill="#6e6e6e"/><rect x="21.5" y="7.5" width="6" height="4.5" fill="none" stroke="#fff" stroke-width="1.2"/><path d="M24 7.5V5.2H30V9.5H27.5" fill="none" stroke="#fff" stroke-width="1.2"/></svg>
<div class="a" style="left:1155.5px;top:129.6px;width:299px;height:1.4px;background:#a8a8a8"></div>
<div class="a" style="left:1155.5px;top:155px;width:299px;height:1.5px;background:#a8a8a8"></div>
<div class="a" style="left:1155.5px;top:131px;width:59.5px;height:24px;background:linear-gradient(#f0f0f0,#e6e6e6 40%,#f4f4f4)"></div>
<div class="a" style="left:1215px;top:131px;width:60px;height:24px;background:linear-gradient(#f0f0f0,#e6e6e6 40%,#f4f4f4)"></div>
<div class="a" style="left:1275px;top:131px;width:59.700000000000045px;height:24px;background:linear-gradient(#f0f0f0,#e6e6e6 40%,#f4f4f4)"></div>
<div class="a" style="left:1334.7px;top:131px;width:60.299999999999955px;height:24px;background:linear-gradient(#f0f0f0,#e6e6e6 40%,#f4f4f4)"></div>
<div class="a" style="left:1395px;top:131px;width:59.5px;height:24px;background:linear-gradient(#f0f0f0,#e6e6e6 40%,#f4f4f4)"></div>
<div class="a" style="left:1154.8px;top:130px;width:1.4px;height:26px;background:#a0a0a0"></div>
<div class="a" style="left:1214.3px;top:130px;width:1.4px;height:26px;background:#a0a0a0"></div>
<div class="a" style="left:1274.3px;top:130px;width:1.4px;height:26px;background:#a0a0a0"></div>
<div class="a" style="left:1334.0px;top:130px;width:1.4px;height:26px;background:#a0a0a0"></div>
<div class="a" style="left:1394.3px;top:130px;width:1.4px;height:26px;background:#a0a0a0"></div>
<div class="a" style="left:1453.8px;top:130px;width:1.4px;height:26px;background:#a0a0a0"></div>
<svg class="a" style="left:0px;top:0px;overflow:visible" width="1500" height="260" viewBox="0 0 1500 260"><g transform="translate(1185 142.5) scale(1.0)"><path d="M-8 0.8Q-5 -5.8 0.5 -5.6Q5.8 -5.3 8.3 -0.2Q5.5 5.6 0 5.4Q-5.5 5.2 -8 0.8Z" fill="#000"/><path d="M-4.3 1.2Q-3.2 -2.4 0 -2.5Q3.3 -2.4 4.3 0.8Q3.2 3.3 0 3.3Q-3.2 3.2 -4.3 1.2Z" fill="#fff"/><circle cx="0" cy="0.4" r="2.1" fill="#000"/><path d="M-1 -0.6L0 0.8L1 -0.6" stroke="#fff" stroke-width=".6" fill="none"/></g><g transform="translate(1245 142.5) scale(1.0)"><path d="M-8 0.8Q-5 -5.8 0.5 -5.6Q5.8 -5.3 8.3 -0.2Q5.5 5.6 0 5.4Q-5.5 5.2 -8 0.8Z" fill="#a8a8a8"/><path d="M-4.3 1.2Q-3.2 -2.4 0 -2.5Q3.3 -2.4 4.3 0.8Q3.2 3.3 0 3.3Q-3.2 3.2 -4.3 1.2Z" fill="#fff"/><circle cx="0" cy="0.4" r="2.1" fill="#a8a8a8"/><path d="M-1 -0.6L0 0.8L1 -0.6" stroke="#fff" stroke-width=".6" fill="none"/></g><path d="M1305 136.5V148.5M1299 142.5H1311" stroke="#8a0000" stroke-width="3.6"/><path d="M1305 136.8V148.2M1299.3 142.5H1310.7" stroke="#ff0000" stroke-width="2.6"/><path d="M1359 142.5H1371" stroke="#8a0000" stroke-width="3.4"/><path d="M1359.3 142.5H1370.7" stroke="#ff0000" stroke-width="2.4"/></svg>
<svg class="a" style="left:0px;top:0px;overflow:visible" width="1500" height="260" viewBox="0 0 1500 260"><path d="M1420.7 147.8L1430.8 138.0" stroke="#7a5412" stroke-width="3.1"/><path d="M1420.9 147.6L1430.6 138.2" stroke="#eab04a" stroke-width="1.9"/><path d="M1429.3 139.5L1431.7 137.1" stroke="#d83a3a" stroke-width="2.8" stroke-linecap="round"/><path d="M1418.5 150L1422.1 148.8L1419.7 146.4Z" fill="#c8a070"/><path d="M1418.5 150L1420.0 149.4L1419.1 148.5Z" fill="#333"/></svg>
<div class="a" style="left:1160.9px;top:163.4px;width:16px;height:8.6px;background:#fff;border:1.2px solid #000"></div>
<span class="t" style="left:1183px;top:160.6px;font-size:13px;color:#111">0</span>
<div class="a" style="left:1160.9px;top:183.4px;width:16px;height:8.6px;background:#ff0000;border:1.2px solid #000"></div>
<span class="t" style="left:1183px;top:180.6px;font-size:13px;color:#111">Center</span>
<div class="a" style="left:1160.9px;top:203.4px;width:16px;height:8.6px;background:#000;border:1.2px solid #000"></div>
<span class="t" style="left:1183px;top:200.6px;font-size:13px;color:#111">Hidden</span>
<div class="a" style="left:1160.9px;top:223.4px;width:16px;height:8.6px;background:#fff;border:1.2px solid #000"></div>
<span class="t" style="left:1183px;top:220.6px;font-size:13px;color:#111">Visible</span>
<svg class="a" style="left:0px;top:0px;overflow:visible" width="1500" height="260" viewBox="0 0 1500 260"><g transform="translate(1422.8 166.8) scale(0.95)"><path d="M-8 0.8Q-5 -5.8 0.5 -5.6Q5.8 -5.3 8.3 -0.2Q5.5 5.6 0 5.4Q-5.5 5.2 -8 0.8Z" fill="#000"/><path d="M-4.3 1.2Q-3.2 -2.4 0 -2.5Q3.3 -2.4 4.3 0.8Q3.2 3.3 0 3.3Q-3.2 3.2 -4.3 1.2Z" fill="#fff"/><circle cx="0" cy="0.4" r="2.1" fill="#000"/><path d="M-1 -0.6L0 0.8L1 -0.6" stroke="#fff" stroke-width=".6" fill="none"/></g><path d="M1441.7 167.3V164.3Q1441.7 160.5 1444.9 160.5Q1448.1 160.5 1448.1 164.3V167.3" fill="none" stroke="#c4c4c4" stroke-width="1.4"/><rect x="1440" y="166.8" width="9.8" height="6.8" fill="#c0c0c0"/><g transform="translate(1422.8 186.8) scale(0.95)"><path d="M-8 0.8Q-5 -5.8 0.5 -5.6Q5.8 -5.3 8.3 -0.2Q5.5 5.6 0 5.4Q-5.5 5.2 -8 0.8Z" fill="#000"/><path d="M-4.3 1.2Q-3.2 -2.4 0 -2.5Q3.3 -2.4 4.3 0.8Q3.2 3.3 0 3.3Q-3.2 3.2 -4.3 1.2Z" fill="#fff"/><circle cx="0" cy="0.4" r="2.1" fill="#000"/><path d="M-1 -0.6L0 0.8L1 -0.6" stroke="#fff" stroke-width=".6" fill="none"/></g><path d="M1441.7 187.3V184.3Q1441.7 180.5 1444.9 180.5Q1448.1 180.5 1448.1 184.3V187.3" fill="none" stroke="#c4c4c4" stroke-width="1.4"/><rect x="1440" y="186.8" width="9.8" height="6.8" fill="#c0c0c0"/><g transform="translate(1422.8 206.8) scale(0.95)"><path d="M-8 0.8Q-5 -5.8 0.5 -5.6Q5.8 -5.3 8.3 -0.2Q5.5 5.6 0 5.4Q-5.5 5.2 -8 0.8Z" fill="#000"/><path d="M-4.3 1.2Q-3.2 -2.4 0 -2.5Q3.3 -2.4 4.3 0.8Q3.2 3.3 0 3.3Q-3.2 3.2 -4.3 1.2Z" fill="#fff"/><circle cx="0" cy="0.4" r="2.1" fill="#000"/><path d="M-1 -0.6L0 0.8L1 -0.6" stroke="#fff" stroke-width=".6" fill="none"/></g><path d="M1441.7 207.3V204.3Q1441.7 200.5 1444.9 200.5Q1448.1 200.5 1448.1 204.3V207.3" fill="none" stroke="#c4c4c4" stroke-width="1.4"/><rect x="1440" y="206.8" width="9.8" height="6.8" fill="#c0c0c0"/><g transform="translate(1422.8 226.8) scale(0.95)"><path d="M-8 0.8Q-5 -5.8 0.5 -5.6Q5.8 -5.3 8.3 -0.2Q5.5 5.6 0 5.4Q-5.5 5.2 -8 0.8Z" fill="#000"/><path d="M-4.3 1.2Q-3.2 -2.4 0 -2.5Q3.3 -2.4 4.3 0.8Q3.2 3.3 0 3.3Q-3.2 3.2 -4.3 1.2Z" fill="#fff"/><circle cx="0" cy="0.4" r="2.1" fill="#000"/><path d="M-1 -0.6L0 0.8L1 -0.6" stroke="#fff" stroke-width=".6" fill="none"/></g><path d="M1441.7 227.3V224.3Q1441.7 220.5 1444.9 220.5Q1448.1 220.5 1448.1 224.3V227.3" fill="none" stroke="#c4c4c4" stroke-width="1.4"/><rect x="1440" y="226.8" width="9.8" height="6.8" fill="#c0c0c0"/><path d="M1396.7 231.10000000000002L1406.3 222.3" stroke="#7a5412" stroke-width="3.1"/><path d="M1396.9 230.9L1406.1 222.5" stroke="#eab04a" stroke-width="1.9"/><path d="M1404.8 223.8L1407.2 221.4" stroke="#d83a3a" stroke-width="2.8" stroke-linecap="round"/><path d="M1394.5 233.3L1398.1 232.10000000000002L1395.7 229.70000000000002Z" fill="#c8a070"/><path d="M1394.5 233.3L1396.0 232.70000000000002L1395.1 231.8Z" fill="#333"/></svg>
<div class="a" style="left:1455px;top:108px;width:45px;height:690px;background:linear-gradient(90deg,#e2e2e2 0,#f2f2f2 10%,#e6e6e6 50%,#d2d2d2 85%,#c6c6c6 100%)"></div>
<div class="a" style="left:1462.5px;top:116px;width:2px;height:2px;background:#9a9a9a"></div>
<div class="a" style="left:1468.5px;top:116px;width:2px;height:2px;background:#9a9a9a"></div>
<div class="a" style="left:1474.5px;top:116px;width:2px;height:2px;background:#9a9a9a"></div>
<div class="a" style="left:1480.5px;top:116px;width:2px;height:2px;background:#9a9a9a"></div>
<div class="a" style="left:1486.5px;top:116px;width:2px;height:2px;background:#9a9a9a"></div>
<div class="a" style="left:1460px;top:261px;width:38px;height:1px;background:repeating-linear-gradient(90deg,#7d7d7d 0 1px,transparent 1px 3px)"></div>
<div class="a" style="left:1460px;top:409px;width:38px;height:1px;background:repeating-linear-gradient(90deg,#7d7d7d 0 1px,transparent 1px 3px)"></div>
<div class="a" style="left:1456px;top:120.2px;width:42px;height:42px;background:#c2c2c2;border-radius:7px"></div>
<div class="a" style="left:1456px;top:417.5px;width:42px;height:42px;background:#c2c2c2;border-radius:7px"></div>
<svg class="a" style="left:1463px;top:126.8px;overflow:visible" width="28" height="28" viewBox="0 0 28 28"><rect x="0.5" y="0.5" width="27" height="27" fill="#fff" stroke="#333" stroke-width="1"/><rect x="0.5" y="0.5" width="27" height="4.5" fill="#000"/><rect x="1.5" y="1.3" width="3" height="3" fill="#fff"/><path d="M9 13.5L14.5 10.5V22L9 24Z" fill="#999" stroke="#555" stroke-width=".6"/><path d="M11 12.5L17 9.5V21.5L11 23.5Z" fill="#ccc" stroke="#555" stroke-width=".6"/><path d="M13.5 11.5L20 8.5V20.5L13.5 22.5Z" fill="#f4f4f4" stroke="#555" stroke-width=".6"/><path d="M15 19.5L17.5 13.5L18.5 19M15.5 17.5H18.5" stroke="#e03030" stroke-width=".8" fill="none"/></svg>
<svg class="a" style="left:1463px;top:174.3px;overflow:visible" width="28" height="28" viewBox="0 0 28 28"><rect x="0.5" y="0.5" width="27" height="27" fill="#fff" stroke="#333" stroke-width="1"/><rect x="0.5" y="0.5" width="27" height="4.5" fill="#000"/><rect x="1.5" y="1.3" width="3" height="3" fill="#fff"/><rect x="7.5" y="9.5" width="9" height="8" fill="#f4e8b0" stroke="#555" stroke-width=".7"/><circle cx="17" cy="18" r="5.3" fill="#f4e8b0" fill-opacity=".7" stroke="#555" stroke-width=".7"/></svg>
<svg class="a" style="left:1463px;top:219.8px;overflow:visible" width="28" height="28" viewBox="0 0 28 28"><rect x="0.5" y="0.5" width="27" height="27" fill="#fff" stroke="#333" stroke-width="1"/><rect x="0.5" y="0.5" width="27" height="4.5" fill="#000"/><rect x="1.5" y="1.3" width="3" height="3" fill="#fff"/><rect x="6" y="11" width="16" height="11" rx="2" fill="#f2f2f2" stroke="#b8c8e8" stroke-width=".8"/></svg>
<svg class="a" style="left:1463px;top:275.8px;overflow:visible" width="28" height="28" viewBox="0 0 28 28"><rect x="0.5" y="0.5" width="27" height="27" fill="#fff" stroke="#333" stroke-width="1"/><rect x="0.5" y="0.5" width="27" height="4.5" fill="#000"/><rect x="1.5" y="1.3" width="3" height="3" fill="#fff"/><rect x="3.5" y="8" width="3.5" height="3" fill="#000"/><rect x="3.5" y="13" width="3.5" height="3" fill="#000"/><rect x="3.5" y="18" width="3.5" height="3" fill="#000"/><rect x="9.5" y="8" width="15" height="3" fill="none" stroke="#333" stroke-width=".7"/><rect x="9.5" y="13" width="15" height="3" fill="none" stroke="#333" stroke-width=".7"/><rect x="9.5" y="18" width="15" height="3" fill="none" stroke="#333" stroke-width=".7"/></svg>
<svg class="a" style="left:1463px;top:322px;overflow:visible" width="28" height="28" viewBox="0 0 28 28"><rect x="0.5" y="0.5" width="27" height="27" fill="#fff" stroke="#333" stroke-width="1"/><rect x="0.5" y="0.5" width="27" height="4.5" fill="#000"/><rect x="1.5" y="1.3" width="3" height="3" fill="#fff"/><path d="M6.5 9.5H21.5L15.5 16V22.5L13.5 23.5V16Z" fill="#d8d8d8" stroke="#333" stroke-width=".8"/><ellipse cx="14" cy="9.8" rx="7.5" ry="1.6" fill="#999" stroke="#333" stroke-width=".6"/></svg>
<svg class="a" style="left:1463px;top:367.7px;overflow:visible" width="28" height="28" viewBox="0 0 28 28"><rect x="0.5" y="0.5" width="27" height="27" fill="#fff" stroke="#333" stroke-width="1"/><rect x="0.5" y="0.5" width="27" height="4.5" fill="#000"/><rect x="1.5" y="1.3" width="3" height="3" fill="#fff"/><path d="M6 10L11 14V21L6 24Z" fill="#fff" stroke="#333" stroke-width=".8"/><rect x="11" y="14" width="10" height="7" fill="#bbb" stroke="#555" stroke-width=".6"/><path d="M4 17.5H24" stroke="#e05050" stroke-width=".6" stroke-dasharray="1.5 1"/></svg>
<svg class="a" style="left:1463px;top:424px;overflow:visible" width="28" height="28" viewBox="0 0 28 28"><rect x="0.5" y="0.5" width="27" height="27" fill="#fff" stroke="#333" stroke-width="1"/><rect x="0.5" y="0.5" width="27" height="4.5" fill="#000"/><rect x="1.5" y="1.3" width="3" height="3" fill="#fff"/><path d="M3 9H12M3 12H12M3 15H13M3 18H12M2.5 23.5H25.5" stroke="#aaa" stroke-width=".8"/><path d="M3 24V27.5M26 24V27.5" stroke="#333" stroke-width=".6"/><path d="M12 25.5H24" stroke="#999" stroke-width=".6"/></svg>
<svg class="a" style="left:1463px;top:471.3px;overflow:visible" width="28" height="28" viewBox="0 0 28 28"><rect x="0.5" y="0.5" width="27" height="27" fill="#fff" stroke="#333" stroke-width="1"/><rect x="0.5" y="0.5" width="27" height="4.5" fill="#000"/><rect x="1.5" y="1.3" width="3" height="3" fill="#fff"/><rect x="8" y="8" width="12" height="15" rx="1" fill="#b87a28"/><rect x="9.5" y="10" width="9" height="11.5" fill="#f6f6f6"/><rect x="11.5" y="7" width="5" height="3" fill="#999"/></svg>

</div></body></html>
